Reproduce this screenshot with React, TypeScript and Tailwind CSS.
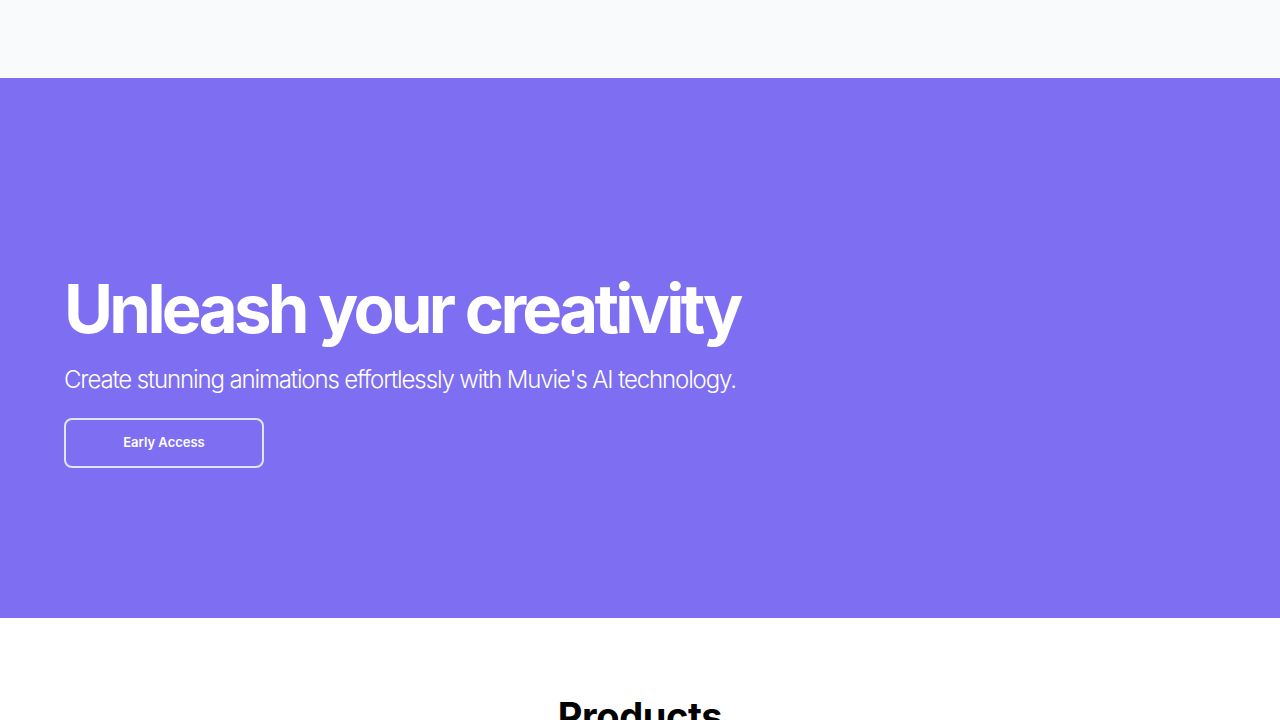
export default function App() {
  return (
    <div className="min-h-screen bg-white font-['Inter',sans-serif] antialiased">
      <header className="h-[78px] bg-gray-50" />

      <section className="flex h-[540px] flex-col justify-center bg-[#7e6ef2] px-16 pt-[45px]">
        <h1 className="text-[67px] leading-[72px] font-bold tracking-[-0.055em] text-white">
          Unleash your creativity
        </h1>
        <p className="mt-[19px] text-2xl font-light tracking-[-0.047em] text-white">
          Create stunning animations effortlessly with Muvie's AI technology.
        </p>
        <button className="mt-[22px] h-[50px] w-[200px] rounded-lg border-2 border-white/80 text-[13px] font-semibold text-white">
          Early Access
        </button>
      </section>

      <section className="pt-[78px] pb-16">
        <h2 className="text-center text-[38px] leading-10 font-bold tracking-[-0.01em] text-black">
          Products
        </h2>
      </section>
    </div>
  );
}
